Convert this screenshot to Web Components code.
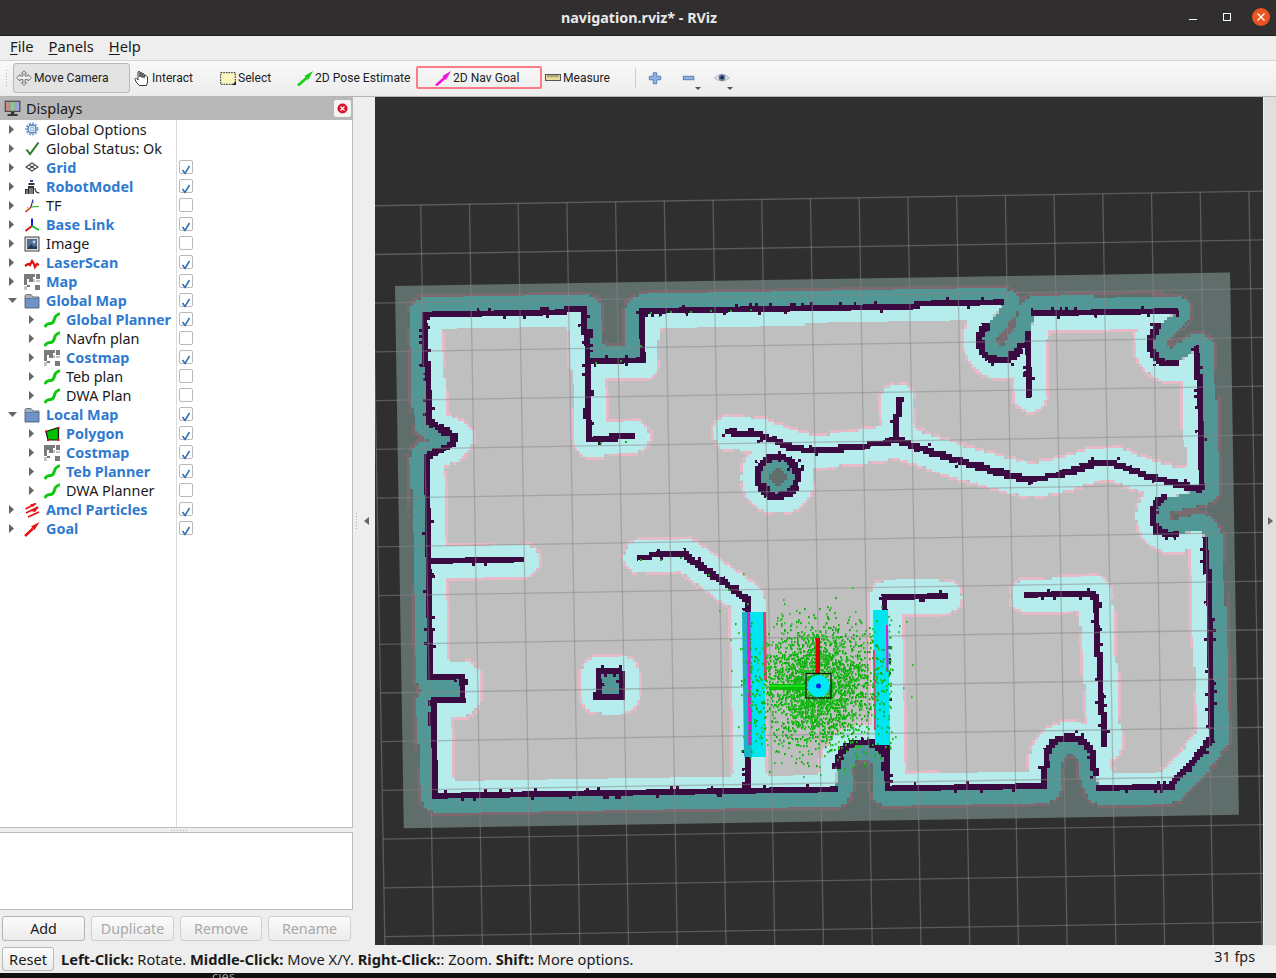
<!DOCTYPE html>
<html>
<head>
<meta charset="utf-8">
<title>navigation.rviz* - RViz</title>
<style>
  html, body { margin: 0; padding: 0; background: #111; overflow: hidden; }
  body { font-family: "Noto Sans", sans-serif; }
</style>
</head>
<body>
<rviz-app></rviz-app>
<script>
const icons = {
  monitor: `<rect x="1.5" y="1.5" width="14" height="10" fill="#444"/><rect x="2.5" y="2.5" width="4" height="8" fill="#c98a8a"/><rect x="6.5" y="2.5" width="4" height="8" fill="#93c793"/><rect x="10.5" y="2.5" width="4" height="8" fill="#9aa7d6"/><rect x="7" y="11.5" width="3" height="2" fill="#333"/><rect x="4" y="13.5" width="9" height="1.5" fill="#222"/>`,
  cog: `<circle cx="8" cy="7" r="5.6" fill="none" stroke="#7da2d6" stroke-width="2" stroke-dasharray="2 1.2"/><circle cx="8" cy="7" r="4" fill="none" stroke="#4f78b5" stroke-width="1.4"/><circle cx="8" cy="7" r="2" fill="#dfe8f5" stroke="#6d90c4" stroke-width=".8"/>`,
  check: `<path d="M2.5 8.5 L6 13 L14.5 1.5" fill="none" stroke="#2c7a2c" stroke-width="2"/>`,
  grid: `<path d="M8 3 L14 7 L8 11 L2 7 Z M5 5 L11 9 M11 5 L5 9" fill="none" stroke="#444" stroke-width="1.1"/>`,
  robot: `<rect x="6" y="1" width="3" height="2" fill="#2a4a9a"/><rect x="4.5" y="4" width="6" height="2" fill="#333"/><path d="M1 15 V10 H4 V7 H10 V15 Z" fill="#333"/><path d="M3 11 V15 M6 9 V15 M8 9 V15" stroke="#eee" stroke-width=".8"/><path d="M11 9 Q11 14 15.5 14" fill="none" stroke="#333" stroke-width="1.2"/>`,
  tf: `<path d="M7 9 L9 1.5" stroke="#2233cc" stroke-width="1.2"/><path d="M7 9 L1.5 14" stroke="#e01010" stroke-width="1.2"/><path d="M7 9 L15 8.5" stroke="#10b010" stroke-width="1.2"/><path d="M3 9 L6 12 M10 4 L8 6" stroke="#d0b000" stroke-width="1"/>`,
  base: `<path d="M8 9 V1.5" stroke="#1818e0" stroke-width="2"/><path d="M8 9 L1.5 14" stroke="#e01010" stroke-width="2"/><path d="M8 9 L15 13" stroke="#10c030" stroke-width="2"/>`,
  image: `<rect x="1" y="1" width="14" height="14" fill="#ddd" stroke="#444"/><rect x="3" y="3" width="10" height="10" fill="#4d6f96"/><path d="M3 13 L7 8 L10 11 L13 10 V13 Z" fill="#27384f"/><circle cx="10" cy="6" r="1.4" fill="#c8d4e2"/>`,
  laser: `<path d="M1 11 L4 9 L6 10 L8 6 L10 9 L11 12 L13 9 L15 10" fill="none" stroke="#e01010" stroke-width="2.2"/>`,
  map: `<rect width="16" height="16" fill="#fff"/><path d="M0 0 H5 V5 H0Z M0 5 H3 V11 H0Z M5 0 H11 V3 H5Z M5 3 H9 V8 H5Z M12 0 H16 V5 H12Z M11 11 H16 V16 H11Z M3 11 H6 V13 H3Z" fill="#7a7a7a"/><path d="M9 5 H11 V8 H9Z M12 6 H16 V8 H12Z M0 12 H3 V16 H0Z" fill="#c4c4c4"/>`,
  folder: `<path d="M1 15 V3 Q1 1.5 2.5 1.5 H7 L9 4 H15 V15 Z" fill="#a9b0ba" stroke="#6b7480"/><rect x="1.5" y="5.5" width="13" height="9" fill="#6f93c6" stroke="#54719e" stroke-width=".8"/>`,
  path: `<path d="M1.5 14 C2.5 11.5 5 11.8 7.5 11.2 C10.5 10.5 10 6.5 11.5 4.5 C12.5 3 14 2.5 15 2" fill="none" stroke="#10c810" stroke-width="3" stroke-linecap="round"/>`,
  polygon: `<path d="M2 5.5 L14.5 1.5 L14.5 14 L4 14 Z" fill="#00c000" stroke="#111" stroke-width="1.2"/><g fill="#e01010"><rect x="1" y="4.5" width="2" height="2"/><rect x="13.5" y="1" width="2" height="2"/><rect x="13.5" y="13" width="2" height="2"/><rect x="3" y="13" width="2" height="2"/></g>`,
  particles: `<path d="M1.5 7 L12 1.5 M2 11 L14 5 M4 15 L15 10" stroke="#e81010" stroke-width="1.6"/><path d="M7 9 L15 5 L11 10 Z M6 2.5 L12 1 L9 5 Z" fill="#e81010"/>`,
  goal: `<path d="M1 15 L9 7.5" stroke="#e81010" stroke-width="2.4"/><path d="M15.5 1 L7 5.5 L10.5 9 Z" fill="#e81010"/>`,
  move: `<path d="M8 .8 L10.5 3.2 H9 V6 H12 V4.6 L15.4 7.8 L12 11 V9.6 H9 V12.6 H10.5 L8 15.4 L5.5 12.6 H7 V9.6 H4 V11 L.6 7.8 L4 4.6 V6 H7 V3.2 H5.5 Z" fill="#eee" stroke="#666" stroke-width=".9"/>`,
  hand: `<path d="M5.5 15.5 Q2 13 1 9.5 Q1 8 2.5 8.5 L4 10 V2 Q5 .6 6 2 V7 V3 Q7 2 8 3 V7.5 V4 Q9 3 10 4 V8 V5.5 Q11 4.5 12 5.5 L13.5 7 V12 L12.5 15.5 Z" fill="#fff" stroke="#222" stroke-width=".9"/>`,
  select: `<rect x=".7" y="2.7" width="14.6" height="11.6" fill="#fbf6bd" stroke="#222" stroke-dasharray="1.6 1" stroke-width="1"/><path d="M16 15 H12 L16 11 Z" fill="#222"/>`,
  pose: `<path d="M1 15.5 L9.5 8" stroke="#10d010" stroke-width="2.6"/><path d="M16 1 L7.5 6 L11 10 Z" fill="#10d010"/>`,
  nav: `<path d="M1 15.5 L9.5 8" stroke="#f014d8" stroke-width="2.6"/><path d="M16 1 L7.5 6 L11 10 Z" fill="#f014d8"/>`,
  ruler: `<rect x=".5" y="4.5" width="15" height="6" fill="#e8dc9c" stroke="#555"/><path d="M3 5 V7.5 M5 5 V7 M7 5 V7.5 M9 5 V7 M11 5 V7.5 M13 5 V7" stroke="#555" stroke-width=".8"/>`,
  plus: `<path d="M6 2 H10 V6 H14.5 V10 H10 V14.5 H6 V10 H1.5 V6 H6 Z" fill="#8fb3e0" stroke="#4a76b5"/>`,
  minus: `<rect x="1.5" y="6" width="12" height="4" fill="#8fb3e0" stroke="#4a76b5"/>`,
  eye: `<path d="M.5 8 Q8 1 15.5 8 Q8 14 .5 8 Z" fill="#dfe3ea" stroke="#b0b6c0"/><circle cx="8" cy="7.6" r="3.3" fill="#5b7299"/><circle cx="8" cy="7.6" r="1.5" fill="#151c33"/>`,
};

const svgIcon = (name, size = 16) =>
  `<svg width="${size}" height="${size}" viewBox="0 0 16 16" style="display:block;flex:none">${icons[name]}</svg>`;

class TitleBar extends HTMLElement {
  constructor() {
    super();
    this.attachShadow({ mode: "open" });
    this.shadowRoot.innerHTML = `
      <style>
        :host { display: flex; height: 35px; background: #302e2e; border-bottom: 1px solid #1f1e1e;
          align-items: center; justify-content: center; position: relative; }
        h1 { margin: 0 0 0 2px; font: 700 14.3px "Noto Sans", sans-serif; color: #e9e9e9; }
        .ctl { position: absolute; }
        .min { left: 1189px; top: 19px; width: 8px; height: 1px; background: #fff; }
        .max { left: 1223px; top: 13px; width: 6px; height: 6px; border: 1px solid #fff; }
        .close { left: 1252px; top: 8px; width: 18px; height: 18px; border-radius: 50%; background: #e95420; }
      </style>
      <h1><slot></slot></h1>
      <span class="ctl min"></span>
      <span class="ctl max"></span>
      <svg class="ctl close" viewBox="0 0 18 18"><path d="M5.5 5.5 L12.5 12.5 M12.5 5.5 L5.5 12.5" stroke="#fff" stroke-width="1.3"/></svg>
    `;
  }
}
customElements.define("title-bar", TitleBar);

class MenuBar extends HTMLElement {
  constructor() {
    super();
    this.attachShadow({ mode: "open" });
    this.shadowRoot.innerHTML = `
      <style>
        :host { display: flex; height: 20px; padding: 0 0 4px 10px; background: #eeeeee; gap: 15px;
          align-items: center; font: 14.7px "Noto Sans", sans-serif; color: #1a1a1a; }
        u { text-underline-offset: 2px; }
      </style>
      <span><u>F</u>ile</span>
      <span><u>P</u>anels</span>
      <span><u>H</u>elp</span>
    `;
  }
}
customElements.define("menu-bar", MenuBar);

class ToolButton extends HTMLElement {
  constructor() {
    super();
    this.attachShadow({ mode: "open" });
  }

  connectedCallback() {
    this.shadowRoot.innerHTML = `
      <style>
        :host { display: flex; align-items: center; box-sizing: border-box; height: 30px;
          font: 12.1px Roboto, "Noto Sans", sans-serif; color: #222; gap: 2px; flex: none; }
        :host([pressed]) { background: #e3e3e3; border: 1px solid #b8b8b8; border-radius: 3px; }
        :host([active]) { height: 23px; border: 2px solid #f97c86; border-radius: 2px; }
      </style>
      ${svgIcon(this.getAttribute("icon"))}
      <slot></slot>
    `;
  }
}
customElements.define("tool-button", ToolButton);

class ToolBar extends HTMLElement {
  constructor() {
    super();
    this.attachShadow({ mode: "open" });
    this.shadowRoot.innerHTML = `
      <style>
        :host { display: flex; height: 37px; box-sizing: border-box; align-items: center;
          background: linear-gradient(#f9f9f9, #ececec); border-top: 1px solid #d4d4d4;
          border-bottom: 1px solid #b4b4b4; padding: 0 0 2px 5px; }
        .grip { width: 3px; height: 18px; margin-right: 5px; flex: none;
          background: radial-gradient(circle, #aaa 0.6px, transparent 1px) 0 0 / 3px 3px; }
        .sep { width: 1px; height: 20px; background: #ccc; margin: 0 12px 0 10px; }
        .drop { position: relative; width: 32px; height: 30px; display: flex; align-items: center; }
        .drop::after { content: ""; position: absolute; left: 13px; top: 24px; border: 3px solid transparent;
          border-top: 3px solid #555; border-bottom: 0; }
      </style>
      <span class="grip"></span>
      <slot></slot>
      <span class="sep"></span>
      <span style="width:34px;display:flex">${svgIcon("plus", 14)}</span>
      <span class="drop">${svgIcon("minus", 14)}</span>
      <span class="drop">${svgIcon("eye", 16)}</span>
    `;
  }
}
customElements.define("tool-bar", ToolBar);

class DisplayRow extends HTMLElement {
  constructor() {
    super();
    this.attachShadow({ mode: "open" });
  }

  connectedCallback() {
    const depth = Number(this.getAttribute("depth") || 0);
    const open = this.hasAttribute("open");
    const check = this.getAttribute("check");
    const tri = open
      ? `<svg width="9" height="6" viewBox="0 0 9 6"><path d="M0 0 H9 L4.5 5 Z" fill="#666"/></svg>`
      : `<svg width="6" height="9" viewBox="0 0 6 9"><path d="M0 0 L5 4.5 L0 9 Z" fill="#666"/></svg>`;
    const box = check === null ? "" : `
      <span class="box">${check === "on"
        ? `<svg width="12" height="12" viewBox="0 0 12 12"><path d="M2.5 6 L5 9.5 L9.5 2" fill="none" stroke="#2b6cb0" stroke-width="1.5"/></svg>`
        : ""}</span>`;
    this.shadowRoot.innerHTML = `
      <style>
        :host { display: flex; height: 19px; align-items: center;
          font: 14.4px "Noto Sans", sans-serif; color: #1a1a1a; }
        :host([on]) { color: #2f7ad0; font-weight: 700; }
        .name { width: 176px; flex: none; display: flex; align-items: center; white-space: nowrap;
          box-sizing: border-box; padding-left: ${depth * 20 + 6}px; overflow: hidden; }
        .tri { width: 12px; flex: none; display: flex; justify-content: center; margin-right: 6px; }
        .ico { margin-right: 6px; flex: none; }
        .box { width: 12px; height: 12px; border: 1px solid #b9b9b9; border-radius: 2px; background: #fff;
          margin: 0 0 1px 3px; display: block; }
      </style>
      <span class="name">
        <span class="tri">${tri}</span>
        <span class="ico">${svgIcon(this.getAttribute("icon"))}</span>
        <slot></slot>
      </span>
      ${box}
    `;
  }
}
customElements.define("display-row", DisplayRow);

class QtButton extends HTMLElement {
  constructor() {
    super();
    this.attachShadow({ mode: "open" });
    this.shadowRoot.innerHTML = `
      <style>
        :host { display: flex; align-items: center; justify-content: center; box-sizing: border-box;
          height: 25px; border: 1px solid #b4b4b4; border-radius: 3px;
          background: linear-gradient(#fbfbfb, #ececec); font: 14.3px "Noto Sans", sans-serif; color: #1a1a1a; }
        :host([disabled]) { color: #a8a8a8; border-color: #cfcfcf; }
      </style>
      <slot></slot>
    `;
  }
}
customElements.define("qt-button", QtButton);

class DisplaysPanel extends HTMLElement {
  constructor() {
    super();
    this.attachShadow({ mode: "open" });
    this.shadowRoot.innerHTML = `
      <style>
        :host { display: flex; flex-direction: column; width: 353px; flex: none; box-sizing: border-box; }
        header { height: 22px; padding: 0 2px 1px 3px; background: #b8b8b8; display: flex; align-items: center;
          font: 14.5px "Noto Sans", sans-serif; color: #1a1a1a; gap: 5px; }
        header b { font-weight: 400; flex: 1; }
        .x { width: 17px; height: 17px; background: #f4f4f4; border-radius: 2px; display: block; }
        .tree { flex: 1; background: #fff linear-gradient(#dcdcdc, #dcdcdc) 176px 0 / 1px 100% no-repeat;
          border: solid #bcbcbc; border-width: 0 1px 1px 1px; margin-left: -1px; }
        .handle { height: 4px; display: flex; align-items: center; }
        .handle i { width: 18px; height: 3px; margin-left: 170px;
          background: radial-gradient(circle, #aaa .6px, transparent 1px) 0 0 / 3px 3px; }
        .details { height: 76px; background: #fff; border: 1px solid #bcbcbc; margin-left: -1px; }
        .buttons { display: grid; grid-template-columns: 83px 83px 82px 83px; gap: 6px; padding: 6px 0 4px 2px; }
      </style>
      <header>
        ${svgIcon("monitor", 18)}
        <b>Displays</b>
        <svg class="x" viewBox="0 0 17 17"><circle cx="8.5" cy="8.5" r="5" fill="#d8152f"/><path d="M6.5 6.5 L10.5 10.5 M10.5 6.5 L6.5 10.5" stroke="#fff" stroke-width="1.2"/></svg>
      </header>
      <div class="tree"><slot name="rows"></slot></div>
      <div class="handle"><i></i></div>
      <div class="details"></div>
      <div class="buttons"><slot name="buttons"></slot></div>
    `;
  }
}
customElements.define("displays-panel", DisplaysPanel);

// the 3d view: an occupancy grid drawn in cells, then grid, scan and robot over it
class MapView extends HTMLElement {
  constructor() {
    super();
    this.attachShadow({ mode: "open" });
    this.shadowRoot.innerHTML = `
      <style>
        :host { display: block; width: 888px; height: 848px; flex: none; background: #2f2f2f; }
        canvas { display: block; }
      </style>
      <canvas width="888" height="848"></canvas>
    `;
  }

  connectedCallback() {
    let seed = 4711;
    const rnd = () => (seed = (seed * 16807) % 2147483647) / 2147483647;
    const gauss = () => (rnd() + rnd() + rnd() + rnd() - 2) * 1.73;

    const arc = (cx, cy, r, a0, a1) => {
      const pts = [];
      const n = Math.ceil(Math.abs(a1 - a0) / 12);
      for (let i = 0; i <= n; i++) {
        const a = ((a0 + ((a1 - a0) * i) / n) * Math.PI) / 180;
        pts.push([cx + r * Math.cos(a), cy + r * Math.sin(a)]);
      }
      return pts;
    };
    // a third value on a point: no wall drawn from it to the next one
    const openEnd = (pts) => {
      pts[pts.length - 1][2] = 1;
      return pts;
    };

    const outline = [
      [425, 314], [585, 311], [588, 362], [642, 362], [642, 311], [1003, 304, 1],
      ...openEnd(arc(1001, 341, 21, 230, 10)),
      [1030, 338, 1], [1035, 313], [1175, 312, 1], [1158, 326],
      ...openEnd(arc(1172, 344, 21, 220, 80)),
      [1198, 350], [1203, 488, 1], [1166, 497],
      ...openEnd(arc(1173, 516, 20, 250, 80)),
      [1200, 530, 1], [1207, 540], [1213, 737], [1194, 762], [1170, 787], [1101, 788, 1], [1096, 775],
      ...arc(1070, 762, 24, 0, -180),
      [1045, 786], [888, 790], [888, 755],
      ...openEnd(arc(863, 768, 26, -30, -180)),
      [835, 790], [437, 796], [433, 702], [463, 700], [463, 677], [432, 677], [427, 457], [452, 445], [457, 438], [430, 423],
    ];

    const innerWalls = [
      [[588, 360], [590, 440], [633, 437]],
      [[729, 433], [760, 435], [790, 447], [815, 452], [860, 447], [898, 441], [960, 462], [1030, 481], [1065, 474], [1093, 465], [1115, 464], [1152, 478], [1200, 490]],
      [[898, 400], [898, 441]],
      [[1030, 335], [1030, 395]],
      [[429, 562], [523, 560]],
      [[640, 557], [685, 555], [748, 600], [750, 790]],
      [[888, 790], [886, 597], [945, 597]],
      [[1027, 596], [1095, 593], [1105, 745]],
    ];
    const square = [[598, 673], [622, 673], [622, 697], [598, 697], [598, 673]];
    const ring = arc(778, 477, 20, 0, 360);

    const cell = 2.9;
    const theta = (0.93 * Math.PI) / 180;
    const low = document.createElement("canvas");
    low.width = 288;
    low.height = 187;
    const g = low.getContext("2d");

    const trace = (pts, close) => {
      const p = new Path2D();
      pts.forEach(([x, y], i) => (i ? p.lineTo(x, y) : p.moveTo(x, y)));
      if (close) p.closePath();
      return p;
    };

    g.scale(1 / cell, 1 / cell);
    g.rotate(theta);
    g.translate(-395, -286);
    g.lineJoin = "round";
    g.lineCap = "round";

    const outer = trace(outline, true);
    g.fillStyle = "#5f6d6b";
    g.fillRect(300, 200, 1100, 800);
    g.strokeStyle = "#7c6a70";
    g.lineWidth = 39;
    g.stroke(outer);
    g.strokeStyle = "#519795";
    g.lineWidth = 33;
    g.stroke(outer);
    g.fillStyle = "#bfbfbf";
    g.fill(outer);

    g.save();
    g.clip(outer);
    const inflated = [outer, ...innerWalls.map((w) => trace(w)), trace(square, true), trace(ring, true)];
    g.strokeStyle = "#e6bac6";
    g.lineWidth = 38;
    inflated.forEach((p) => g.stroke(p));
    g.strokeStyle = "#b6ecec";
    g.lineWidth = 33;
    inflated.forEach((p) => g.stroke(p));
    g.restore();

    g.fillStyle = "#519795";
    g.fill(trace(square, true));
    g.fill(trace(ring, true));
    g.fillStyle = "#5f6d6b";
    g.beginPath();
    g.arc(778, 477, 8, 0, 7);
    g.fill();

    // snap every blended pixel back to the cost map's palette
    const palette = [
      [95, 109, 107], [124, 106, 112], [81, 151, 149], [191, 191, 191], [230, 186, 198], [182, 236, 236],
    ];
    const data = g.getImageData(0, 0, low.width, low.height);
    const d = data.data;
    for (let i = 0; i < d.length; i += 4) {
      let best = palette[0];
      let bestDist = 1e9;
      for (const c of palette) {
        const dist = (c[0] - d[i]) ** 2 + (c[1] - d[i + 1]) ** 2 + (c[2] - d[i + 2]) ** 2;
        if (dist < bestDist) {
          bestDist = dist;
          best = c;
        }
      }
      d[i] = best[0];
      d[i + 1] = best[1];
      d[i + 2] = best[2];
      d[i + 3] = 255;
    }
    g.setTransform(1, 0, 0, 1, 0, 0);
    g.putImageData(data, 0, 0);

    const toCell = ([x, y]) => {
      const dx = x - 395;
      const dy = y - 286;
      return [
        (dx * Math.cos(theta) - dy * Math.sin(theta)) / cell,
        (dx * Math.sin(theta) + dy * Math.cos(theta)) / cell,
      ];
    };

    const stamp = (pts, close) => {
      const list = close ? [...pts, pts[0]] : pts;
      g.fillStyle = "#3a0a40";
      for (let i = 0; i < list.length - 1; i++) {
        if (list[i][2]) continue;
        const [ax, ay] = toCell(list[i]);
        const [bx, by] = toCell(list[i + 1]);
        const n = Math.max(1, Math.ceil(Math.hypot(bx - ax, by - ay) * 2));
        for (let k = 0; k <= n; k++) {
          const x = ax + ((bx - ax) * k) / n;
          const y = ay + ((by - ay) * k) / n;
          g.fillRect(Math.floor(x - 0.7), Math.floor(y - 0.7), 2, 2);
          if (rnd() < 0.1) g.fillRect(Math.floor(x - 0.7) + (rnd() < 0.5 ? -1 : 2), Math.floor(y - 0.7) + (rnd() < 0.5 ? -1 : 2), 1, 1);
        }
      }
    };
    stamp(outline, true);
    innerWalls.forEach((w) => stamp(w));
    stamp(square);
    stamp(ring);

    const ctx = this.shadowRoot.querySelector("canvas").getContext("2d");
    ctx.fillStyle = "#2f2f2f";
    ctx.fillRect(0, 0, 888, 848);
    ctx.translate(-375, -97);

    ctx.save();
    ctx.imageSmoothingEnabled = false;
    ctx.translate(395, 286);
    ctx.rotate(-theta);
    ctx.scale(cell, cell);
    ctx.drawImage(low, 0, 0);
    ctx.restore();

    // translucent reference grid
    const gridPoint = (i, j) => [420.7 + i * 48.72 + j * 0.85, 205 - i * 0.8 + j * 48.72];
    ctx.strokeStyle = "rgba(135,135,135,0.5)";
    ctx.lineWidth = 1.3;
    for (let i = -1; i <= 18; i++) {
      ctx.beginPath();
      ctx.moveTo(...gridPoint(i, 0));
      ctx.lineTo(...gridPoint(i, 17));
      ctx.stroke();
    }
    for (let j = 0; j <= 17; j++) {
      ctx.beginPath();
      ctx.moveTo(...gridPoint(-1, j));
      ctx.lineTo(...gridPoint(18, j));
      ctx.stroke();
    }

    // laser scan bands
    const band = (color, x0, y0, x1, y1, shear) => {
      ctx.fillStyle = color;
      ctx.beginPath();
      ctx.moveTo(x0, y0);
      ctx.lineTo(x1, y0);
      ctx.lineTo(x1 + shear, y1);
      ctx.lineTo(x0 + shear, y1);
      ctx.closePath();
      ctx.fill();
    };
    band("#18b4c4", 742, 612, 750, 757, 2);
    band("#00e6f0", 750, 612, 764, 757, 2);
    band("#ee10d8", 747, 612, 750, 745, 1.5);
    band("#d24a6c", 763, 612, 766, 680, 1);
    band("#00e6f0", 873, 610, 888, 745, 2);
    band("#ee10d8", 886, 625, 888, 672, 0.5);
    band("#d24a6c", 873, 650, 875, 730, 1);

    // amcl particles
    for (let i = 0; i < 2600; i++) {
      const wide = i % 12 === 0;
      const x = 817 + gauss() * (wide ? 40 : 27);
      const y = 686 + gauss() * (wide ? 44 : 30);
      ctx.fillStyle = i % 3 ? "#0cb00c" : "#2cc02c";
      ctx.fillRect(Math.round(x), Math.round(y), 1.6, 2.2);
    }
    ctx.fillStyle = "#12b012";
    for (let i = 0; i < 28; i++) {
      ctx.fillRect(888 + rnd() * 3, 600 + rnd() * 150, 1.5, 2);
      ctx.fillRect(749 + rnd() * 2, 615 + rnd() * 130, 1.5, 2);
    }
    [[595, 362], [620, 360], [640, 345], [600, 442], [625, 441], [650, 312], [670, 311], [690, 311], [710, 310], [730, 310], [750, 309],
     [640, 559], [660, 559], [680, 557], [708, 574], [728, 589]].forEach(([x, y]) => ctx.fillRect(x, y, 2, 2));

    // robot footprint and goal axes
    ctx.fillStyle = "#dd0000";
    ctx.fillRect(815.5, 638, 4.5, 36);
    ctx.fillStyle = "#00c000";
    ctx.fillRect(769, 684, 37, 6);
    ctx.fillStyle = "#22dd22";
    ctx.fillRect(769, 685, 37, 2);
    ctx.strokeStyle = "#111";
    ctx.lineWidth = 1.2;
    ctx.strokeRect(806, 673.5, 25, 24.5);
    ctx.fillStyle = "#00e8f4";
    ctx.beginPath();
    ctx.arc(818.5, 686, 11, 0, 7);
    ctx.fill();
    ctx.fillStyle = "#0a2ae0";
    ctx.beginPath();
    ctx.arc(818.5, 686, 2.5, 0, 7);
    ctx.fill();
  }
}
customElements.define("map-view", MapView);

class StatusBar extends HTMLElement {
  constructor() {
    super();
    this.attachShadow({ mode: "open" });
    this.shadowRoot.innerHTML = `
      <style>
        :host { display: flex; height: 28px; background: #eeeeee; align-items: center; padding: 0 21px 0 2px;
          font: 14.65px "Noto Sans", sans-serif; color: #1a1a1a; position: relative; }
        .hint { margin-left: 7px; flex: 1; white-space: nowrap; }
        .fps { margin-bottom: 6px; font-size: 14.3px; }
        .reset { width: 52px; height: 24px; box-sizing: border-box; border: 1px solid #b8b8b8; border-radius: 3px;
          background: linear-gradient(#fbfbfb, #ececec); display: flex; align-items: center; justify-content: center; }
      </style>
      <span class="reset">Reset</span>
      <span class="hint"><slot></slot></span>
      <span class="fps">31 fps</span>
    `;
  }
}
customElements.define("status-bar", StatusBar);

class RvizApp extends HTMLElement {
  constructor() {
    super();
    this.attachShadow({ mode: "open" });
    const rows = [
      ["cog", "Global Options", 0, null, 0],
      ["check", "Global Status: Ok", 0, null, 0],
      ["grid", "Grid", 0, "on", 1],
      ["robot", "RobotModel", 0, "on", 1],
      ["tf", "TF", 0, "off", 0],
      ["base", "Base Link", 0, "on", 1],
      ["image", "Image", 0, "off", 0],
      ["laser", "LaserScan", 0, "on", 1],
      ["map", "Map", 0, "on", 1],
      ["folder", "Global Map", 0, "on", 1, 1],
      ["path", "Global Planner", 1, "on", 1],
      ["path", "Navfn plan", 1, "off", 0],
      ["map", "Costmap", 1, "on", 1],
      ["path", "Teb plan", 1, "off", 0],
      ["path", "DWA Plan", 1, "off", 0],
      ["folder", "Local Map", 0, "on", 1, 1],
      ["polygon", "Polygon", 1, "on", 1],
      ["map", "Costmap", 1, "on", 1],
      ["path", "Teb Planner", 1, "on", 1],
      ["path", "DWA Planner", 1, "off", 0],
      ["particles", "Amcl Particles", 0, "on", 1],
      ["goal", "Goal", 0, "on", 1],
    ];
    const rowHtml = rows
      .map(([icon, label, depth, check, on, open]) =>
        `<display-row slot="rows" icon="${icon}" depth="${depth}"${check ? ` check="${check}"` : ""}${on ? " on" : ""}${open ? " open" : ""}>${label}</display-row>`)
      .join("");
    this.shadowRoot.innerHTML = `
      <style>
        :host { display: flex; flex-direction: column; width: 1276px; height: 978px; overflow: hidden; background: #eee; }
        .main { display: flex; height: 848px; }
        .split { flex: 1; display: flex; align-items: center; background: #eeeeee; position: relative; }
        .dots { width: 3px; height: 18px; margin-left: 2px; background: radial-gradient(circle, #aaa .6px, transparent 1px) 0 0 / 3px 3px; }
        .arrow { margin-left: 6px; border: 4px solid transparent; border-right: 5px solid #666; border-left: 0; }
        .right { width: 13px; flex: none; background: #dfdfdf; border-left: 1px solid #eee; box-sizing: border-box; display: flex; align-items: center; justify-content: center; }
        .right i { border: 4px solid transparent; border-left: 5px solid #666; border-right: 0; }
        .under { height: 5px; background: #111; overflow: hidden; padding-left: 212px; font: 13px/7px "Noto Sans", sans-serif; color: #9a9a9a; }
      </style>
      <title-bar>navigation.rviz* - RViz</title-bar>
      <menu-bar></menu-bar>
      <tool-bar>
        <tool-button icon="move" pressed style="width:117px;padding-left:2px">Move Camera</tool-button>
        <tool-button icon="hand" style="width:85px;padding-left:4px">Interact</tool-button>
        <tool-button icon="select" style="width:76px;padding-left:5px">Select</tool-button>
        <tool-button icon="pose" style="width:125px;padding-left:6px">2D Pose Estimate</tool-button>
        <tool-button icon="nav" active style="width:126px;padding-left:17px">2D Nav Goal</tool-button>
        <tool-button icon="ruler" style="width:83px;padding-left:3px">Measure</tool-button>
      </tool-bar>
      <div class="main">
        <displays-panel>
          ${rowHtml}
          <qt-button slot="buttons">Add</qt-button>
          <qt-button slot="buttons" disabled>Duplicate</qt-button>
          <qt-button slot="buttons" disabled>Remove</qt-button>
          <qt-button slot="buttons" disabled>Rename</qt-button>
        </displays-panel>
        <div class="split"><span class="dots"></span><span class="arrow"></span></div>
        <map-view></map-view>
        <div class="right"><i></i></div>
      </div>
      <status-bar><b>Left-Click:</b> Rotate. <b>Middle-Click:</b> Move X/Y. <b>Right-Click:</b>: Zoom. <b>Shift:</b> More options.</status-bar>
      <div class="under">cies</div>
    `;
  }
}
customElements.define("rviz-app", RvizApp);
</script>
</body>
</html>
